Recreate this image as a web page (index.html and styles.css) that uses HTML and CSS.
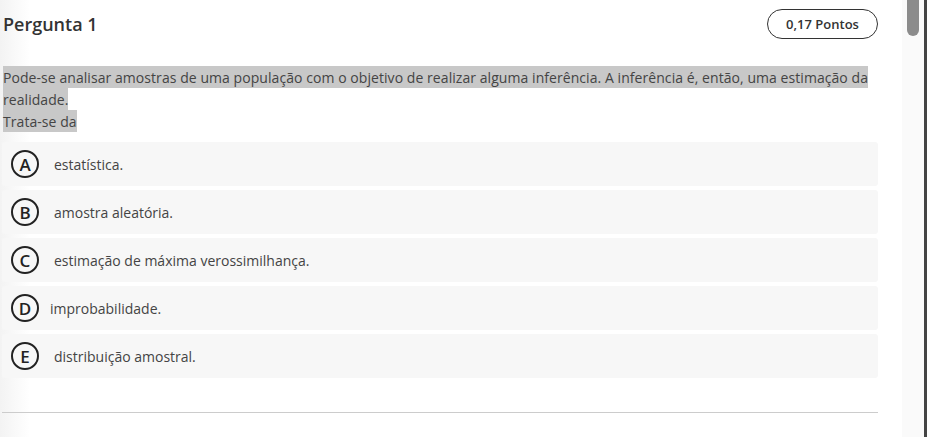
FILE: index.html
```html
<!DOCTYPE html>
<html lang="pt">
<head>
<meta charset="utf-8">
<title>Pergunta 1</title>
<link rel="stylesheet" href="styles.css">
</head>
<body>
<div class="page">
  <main class="content">
    <header class="q-head">
      <h1 class="q-title">Pergunta 1</h1>
      <span class="points">0,17 Pontos</span>
    </header>
    <p class="q-text"><span class="hl">Pode-se analisar amostras de uma população com o objetivo de realizar alguma inferência. A inferência é, então, uma estimação da </span><br><span class="hl">realidade.</span><br><span class="hl">Trata-se da</span></p>
    <ul class="options">
      <li class="option"><span class="letter">A</span><span class="opt-text">estatística.</span></li>
      <li class="option"><span class="letter">B</span><span class="opt-text">amostra aleatória.</span></li>
      <li class="option"><span class="letter">C</span><span class="opt-text">estimação de máxima verossimilhança.</span></li>
      <li class="option"><span class="letter">D</span><span class="opt-text tight">improbabilidade.</span></li>
      <li class="option"><span class="letter">E</span><span class="opt-text">distribuição amostral.</span></li>
    </ul>
    <hr class="divider">
  </main>
  <aside class="scroll-track"><div class="scroll-thumb"></div></aside>
  <div class="edge"></div>
</div>
</body>
</html>
```
FILE: styles.css
```css
html, body {
  margin: 0;
  padding: 0;
  background: #fff;
}
body {
  font-family: "Open Sans", "Liberation Sans", sans-serif;
  color: #444;
}
.page {
  display: flex;
  height: 437px;
  overflow: hidden;
  background: linear-gradient(to right, #f3f3f3 0, #fff 30px);
}
.content {
  width: 876px;
  padding-left: 2px;
  flex: none;
}
.q-head {
  display: flex;
  justify-content: space-between;
  align-items: center;
  height: 47px;
}
.q-title {
  margin: 0 0 0 1px;
  font-size: 18px;
  font-weight: 600;
  color: #333;
  line-height: 24px;
}
.points {
  box-sizing: border-box;
  height: 30px;
  width: 111px;
  border: 1px solid #333;
  border-radius: 15px;
  font-size: 13px;
  font-weight: 600;
  color: #333;
  display: flex;
  align-items: center;
  justify-content: center;
}
.q-text {
  margin: 19px 0 0 1px;
  font-size: 14px;
  line-height: 22px;
  letter-spacing: 0.06px;
  color: #444;
}
.hl {
  background: #c8c8c8;
  padding: 1.5px 0;
}
.options {
  list-style: none;
  margin: 10px 0 0;
  padding: 0;
  display: flex;
  flex-direction: column;
  gap: 4px;
}
.option {
  height: 44px;
  background: #f7f7f7;
  border-radius: 3px;
  display: flex;
  align-items: center;
  padding-left: 9px;
}
.letter {
  box-sizing: border-box;
  width: 28px;
  height: 28px;
  border: 2px solid #222;
  border-radius: 50%;
  display: flex;
  align-items: center;
  justify-content: center;
  font-size: 17px;
  font-weight: 600;
  line-height: 1;
  color: #222;
  flex: none;
}
.opt-text {
  margin-left: 15px;
  font-size: 14px;
  color: #444;
}
.opt-text.tight {
  margin-left: 11px;
}
.divider {
  margin: 34px 0 0;
  border: 0;
  border-top: 1px solid #cccccc;
  height: 0;
}
.scroll-track {
  margin-left: 24px;
  width: 22px;
  background: #fafafa;
  flex: none;
  padding-left: 5px;
  box-sizing: border-box;
}
.scroll-thumb {
  width: 12px;
  height: 36px;
  background: #8c8c8c;
  border-radius: 0 0 6px 6px;
}
.edge {
  flex: 1;
  background: #444;
}
```
